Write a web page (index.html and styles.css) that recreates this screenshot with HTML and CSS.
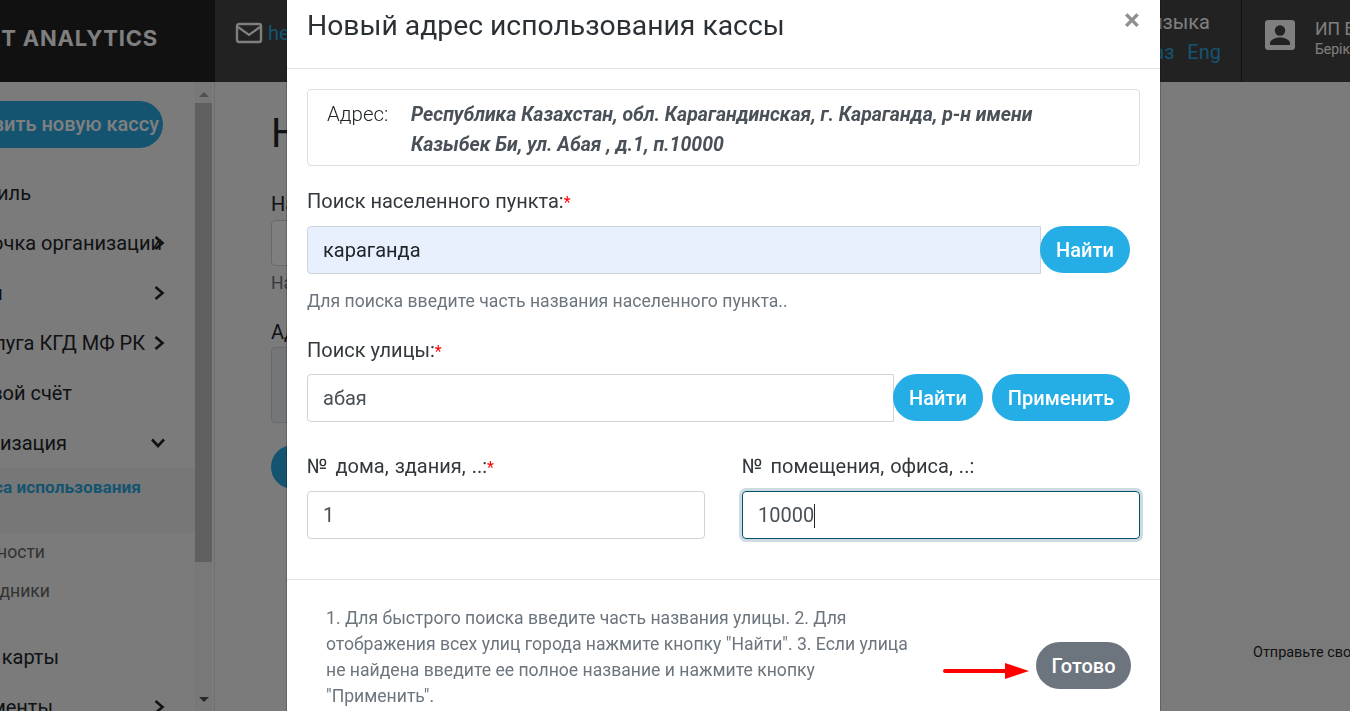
FILE: index.html
```html
<!DOCTYPE html>
<html lang="ru">
<head>
<meta charset="utf-8">
<title>Новый адрес использования кассы</title>
<link rel="stylesheet" href="styles.css">
</head>
<body>
<div class="page">
  <header class="topbar">
    <div class="brand"><span class="brand-text">SMART ANALYTICS</span></div>
    <div class="contact">
      <svg class="mail" width="28" height="22" viewBox="0 0 28 22"><rect x="2" y="2" width="24" height="18" rx="2" fill="none" stroke="#fff" stroke-width="2.4"/><path d="M3 5l11 8 11-8" fill="none" stroke="#fff" stroke-width="2.2"/></svg>
      <a class="link mail-link">help@smart.kz</a>
    </div>
    <div class="lang">
      <div class="lang-title">Смена языка</div>
      <div class="lang-list"><a class="link">Рус</a><a class="link">Қаз</a><a class="link">Eng</a></div>
    </div>
    <div class="user">
      <svg class="avatar" width="30" height="30" viewBox="0 0 30 30"><rect width="30" height="30" rx="3" fill="#fff"/><circle cx="15" cy="10.5" r="5.2" fill="#444"/><path d="M5 25v-1.6C5 19.5 11 17.6 15 17.6s10 1.9 10 5.8V25z" fill="#444"/></svg>
      <div class="user-text"><div class="user-name">ИП Берік</div><div class="user-sub">Берік Серік</div></div>
    </div>
  </header>
  <div class="content">
    <aside class="sidebar">
      <div class="side-scroll">
        <a class="add-btn">Добавить новую кассу</a>
        <nav class="menu">
          <div class="item"><span class="t t-profile">Профиль</span></div>
          <div class="item"><span class="t t-card">Карточка организации</span><svg class="chev" viewBox="0 0 12 16"><path d="M2.5 2l7 6-7 6" /></svg></div>
          <div class="item"><span class="t t-kassy">Кассы</span><svg class="chev" viewBox="0 0 12 16"><path d="M2.5 2l7 6-7 6" /></svg></div>
          <div class="item"><span class="t t-usluga">Услуга КГД МФ РК</span><svg class="chev" viewBox="0 0 12 16"><path d="M2.5 2l7 6-7 6" /></svg></div>
          <div class="item"><span class="t t-schet">Лицевой счёт</span></div>
          <div class="item"><span class="t t-org">Организация</span><svg class="chev down" viewBox="0 0 16 12"><path d="M2 2.5l6 6.5 6-6.5" /></svg></div>
          <div class="sub-active"><span class="t t-addr">Адреса использования</span></div>
          <div class="sub"><span class="t t-dolzh">Должности</span></div>
          <div class="sub"><span class="t t-sotr">Сотрудники</span></div>
          <div class="item after-sub"><span class="t t-karty">Банковские карты</span></div>
          <div class="item"><span class="t t-doc">Документы</span><svg class="chev" viewBox="0 0 12 16"><path d="M2.5 2l7 6-7 6" /></svg></div>
        </nav>
      </div>
      <div class="scrollbar">
        <div class="sb-arrow up"></div>
        <div class="sb-track"><div class="sb-thumb"></div></div>
        <div class="sb-arrow dn"></div>
      </div>
    </aside>
    <main class="main">
      <h1 class="main-title">Новый адрес</h1>
      <label class="main-label">Наименование</label>
      <div class="main-input"></div>
      <div class="main-help">Наименование кассы</div>
      <label class="main-label second">Адрес</label>
      <div class="main-area"></div>
      <div class="main-btn"></div>
      <div class="chat-hint">Отправьте свой вопрос</div>
    </main>
  </div>
</div>
<div class="overlay"></div>
<section class="modal">
  <div class="modal-head">
    <h2 class="modal-title">Новый адрес использования кассы</h2>
    <span class="close">×</span>
  </div>
  <div class="modal-body">
    <div class="addr-box">
      <span class="addr-label">Адрес:</span>
      <span class="addr-value">Республика Казахстан, обл. Карагандинская, г. Караганда, р-н имени Казыбек Би, ул. Абая , д.1, п.10000</span>
    </div>
    <label class="lbl first">Поиск населенного пункта:<b class="req">*</b></label>
    <div class="search-row">
      <div class="input filled">караганда</div>
      <button class="btn">Найти</button>
    </div>
    <div class="help">Для поиска введите часть названия населенного пункта..</div>
    <label class="lbl street">Поиск улицы:<b class="req">*</b></label>
    <div class="search-row">
      <div class="input">абая</div>
      <button class="btn">Найти</button>
      <button class="btn apply">Применить</button>
    </div>
    <div class="two">
      <div>
        <label class="lbl"><span class="num">№</span> дома, здания, ..:<b class="req">*</b></label>
        <div class="input">1</div>
      </div>
      <div>
        <label class="lbl"><span class="num">№</span> помещения, офиса, ..:</label>
        <div class="input focus">10000<i class="caret"></i></div>
      </div>
    </div>
  </div>
  <div class="modal-foot">
    <p class="hint">1. Для быстрого поиска введите часть названия улицы. 2. Для отображения всех улиц города нажмите кнопку "Найти". 3. Если улица не найдена введите ее полное название и нажмите кнопку "Применить".</p>
    <svg class="arrow" width="88" height="20" viewBox="0 0 88 20"><path d="M2 10h62" stroke="#f00" stroke-width="4" stroke-linecap="round"/><path d="M62 2l24 8-24 8z" fill="#f00"/></svg>
    <button class="btn done">Готово</button>
  </div>
</section>
</body>
</html>
```
FILE: styles.css
```css
* { box-sizing: border-box; }
html, body { margin: 0; height: 100%; overflow: hidden; }
body { font-family: Roboto, sans-serif; color: #212529; background: #f6f6f6; }

.page { height: 711px; display: flex; flex-direction: column; }
.topbar { height: 82px; flex: none; display: flex; background: #444; color: #fff; }
.brand { width: 215px; flex: none; background: #222; overflow: hidden; display: flex; align-items: center; justify-content: flex-end; padding-right: 57px; padding-bottom: 6px; }
.brand-text { font-family: Inter, sans-serif; font-weight: 700; font-size: 22px; white-space: nowrap; letter-spacing: .8px; }
.contact { width: 885px; flex: none; display: flex; align-items: flex-start; padding: 22px 0 0 20px; gap: 5px; }
.link { color: #2aa9e0; }
.mail-link { font-size: 20px; line-height: 22px; }
.lang { width: 141px; flex: none; padding: 10px 20px 0 0; font-size: 20px; }
.lang-title { display: flex; justify-content: flex-end; line-height: 24px; white-space: nowrap; padding-right: 11px; }
.lang-list { display: flex; justify-content: flex-end; gap: 13px; margin-top: 6px; line-height: 24px; }
.user { flex: 1; border-left: 1px solid #222; display: flex; gap: 20px; padding: 20px 0 0 23px; overflow: hidden; }
.avatar { flex: none; }
.user-name { font-size: 17.6px; line-height: 18px; white-space: nowrap; }
.user-sub { font-size: 14px; line-height: 18px; white-space: nowrap; margin-top: 2px; }

.content { flex: 1; display: flex; min-height: 0; }
.sidebar { width: 215px; flex: none; display: flex; border-right: 1px solid #dfdfdf; overflow: hidden; }
.side-scroll { width: 195px; flex: none; overflow: hidden; }
.add-btn { display: flex; justify-content: flex-end; width: 200px; height: 47px; margin: 19px 0 0 -37px; padding-right: 4px; border-radius: 24px; background: #2aa9e0; color: #fff; font-size: 20px; font-weight: 500; line-height: 47px; white-space: nowrap; }
.menu { margin-top: 20px; }
.item { height: 50px; position: relative; display: flex; align-items: center; font-size: 20px; white-space: nowrap; }
.t { display: flex; justify-content: flex-end; white-space: nowrap; }
.t-profile { width: 31px; }
.t-card { width: 162px; }
.t-kassy { width: 3px; }
.t-usluga { width: 145px; }
.t-schet { width: 72px; }
.t-org { width: 67px; }
.t-karty { width: 59px; }
.t-doc { width: 53px; }
.chev { position: absolute; left: 153px; top: 17px; width: 12px; height: 16px; fill: none; stroke: #212529; stroke-width: 2.6; }
.chev.down { left: 150px; top: 19px; width: 16px; height: 12px; }
.sub-active { height: 65px; background: #eee; font-size: 17.3px; font-weight: 700; color: #2aa9e0; padding-top: 8px; line-height: 22px; }
.t-addr { width: 141px; }
.sub { height: 39px; font-size: 17.6px; color: #666; line-height: 39px; }
.t-dolzh { width: 45px; }
.t-sotr { width: 50px; }
.after-sub { margin-top: 21px; }

.scrollbar { width: 19px; flex: none; display: flex; flex-direction: column; background: #f1f1f1; border-right: 2px solid #f6f6f6; }
.sb-arrow { height: 21px; flex: none; position: relative; }
.sb-arrow::after { content: ""; position: absolute; left: 4px; border-left: 5px solid transparent; border-right: 5px solid transparent; }
.sb-arrow.up::after { top: 10px; border-bottom: 5px solid #a3a3a3; }
.sb-arrow.dn::after { top: 7px; border-top: 5px solid #505050; }
.sb-track { flex: 1; }
.sb-thumb { height: 459px; background: #c1c1c1; width: 17px; }

.main { flex: 1; padding: 0 0 0 56px; position: relative; min-width: 0; }
.main-title { margin: 28px 0 0; font-size: 40px; font-weight: 400; line-height: 48px; }
.main-label { display: block; margin-top: 34px; font-size: 20px; line-height: 24px; }
.main-label.second { margin-top: 25px; }
.main-input { width: 500px; height: 46px; border: 1px solid #ced4da; border-radius: 4px; background: #fff; margin-top: 4px; }
.main-help { margin-top: 5px; font-size: 17.6px; color: #6c757d; line-height: 24px; }
.main-area { width: 500px; height: 76px; border: 1px solid #ced4da; border-radius: 4px; background: #e9ecef; margin-top: 3px; }
.main-btn { width: 160px; height: 44px; border-radius: 23px; background: #2aa9e0; margin-top: 22px; }
.chat-hint { position: absolute; left: 1034px; top: 559px; width: 120px; height: 23px; padding: 0 4px; font-size: 14.4px; line-height: 23px; background: #f5f5f5; white-space: nowrap; overflow: hidden; }

.overlay { position: fixed; inset: 0; background: rgba(0,0,0,.5); }
.modal { position: absolute; left: 287px; top: 0; width: 873px; height: 780px; background: #fff; box-shadow: 0 0 0 1px rgba(0,0,0,.2); }
.modal-head { height: 69px; border-bottom: 1px solid #dee2e6; padding: 0 20px; position: relative; }
.modal-title { margin: 0; padding-top: 8px; font-size: 28.3px; font-weight: 400; line-height: 36px; color: #2b3035; }
.close { position: absolute; right: 20px; top: 1px; font-size: 30px; line-height: 38px; font-weight: 700; color: #8f8f8f; }
.modal-body { height: 511px; padding: 20px 20px 0; border-bottom: 1px solid #dee2e6; }
.addr-box { height: 77px; border: 1px solid #dfdfdf; border-radius: 4px; display: flex; padding: 10px 19px; font-size: 19.5px; line-height: 30px; }
.addr-label { width: 84px; flex: none; font-weight: 300; font-size: 20.5px; line-height: 28px; }
.addr-value { width: 640px; font-style: italic; font-weight: 700; color: #495057; }
.lbl { display: block; font-size: 20px; line-height: 24px; margin-bottom: 13px; color: #33383d; }
.lbl.first { margin-top: 23px; }
.lbl.street { margin-top: 25px; margin-bottom: 12px; }
.req { color: #f00; font-weight: 400; font-size: 16px; line-height: 0; }
.num { margin-right: 2px; }
.search-row { display: flex; }
.input { flex: 1; height: 48px; border: 1px solid #ced4da; border-radius: 4px; padding: 0 15px; font-size: 20px; line-height: 46px; color: #495057; }
.search-row .input { border-radius: 4px 0 0 4px; }
.input.filled { background: #e8f0fe; color: #212529; }
.btn { width: 90px; height: 47px; margin-left: -1px; margin-right: 10px; border: 0; border-radius: 24px; background: #25aee6; color: #fff; font: 500 20px Roboto, sans-serif; padding: 0; }
.apply { width: 138px; }
.search-row .btn + .btn { margin-left: -1px; }
.help { margin-top: 15px; font-size: 17.6px; line-height: 24px; color: #6c757d; }
.two { display: grid; grid-template-columns: 398px 398px; column-gap: 37px; margin-top: 32px; }
.two .lbl { word-spacing: 1px; }
.input.focus { border-color: #00506b; box-shadow: 0 0 0 3px rgba(0,80,107,.2); position: relative; }
.caret { display: inline-block; width: 1px; height: 24px; background: #212529; vertical-align: -6px; }
.modal-foot { position: relative; padding: 25px 20px 0 39px; display: flex; }
.hint { margin: 0; width: 590px; font-size: 17.6px; line-height: 26px; color: #6c757d; }
.arrow { position: absolute; left: 656px; top: 81px; }
.btn.done { position: absolute; left: 749px; top: 62px; width: 95px; margin: 0; background: #6c757d; }
```
